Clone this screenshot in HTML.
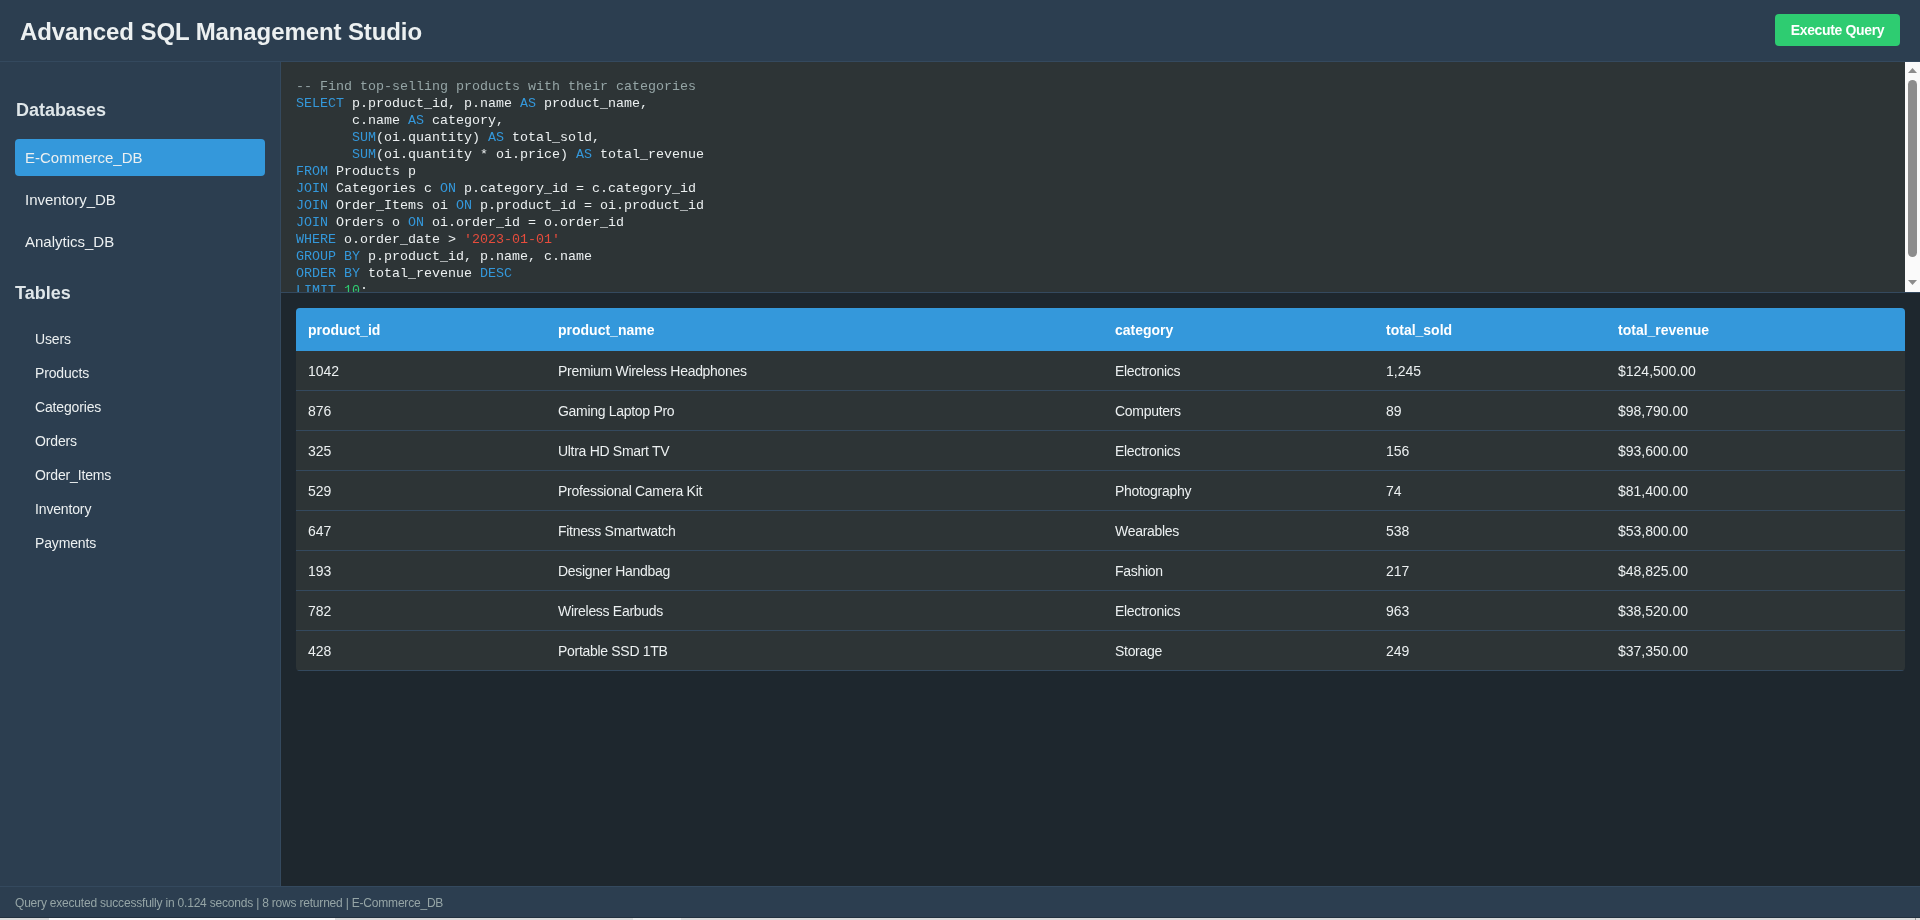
<!DOCTYPE html>
<html>
<head>
<meta charset="utf-8">
<style>
*{box-sizing:border-box;margin:0;padding:0;}
html,body{width:1920px;height:920px;overflow:hidden;will-change:transform;background:#2c3e50;font-family:"Liberation Sans",sans-serif;color:#ecf0f1;}
.header{position:absolute;left:0;top:0;width:1920px;height:62px;background:#2c3e50;border-bottom:1px solid #34495e;}
.title{position:absolute;left:20px;top:18px;letter-spacing:-0.1px;font-size:24px;font-weight:bold;line-height:28px;color:#ecf0f1;white-space:nowrap;}
.btn{position:absolute;left:1775px;top:14px;width:125px;height:32px;background:#2ecc71;border-radius:4px;color:#fff;font-weight:bold;font-size:14px;letter-spacing:-0.35px;line-height:33px;text-align:center;}
.sidebar{position:absolute;left:0;top:62px;width:281px;height:824px;background:#2c3e50;border-right:1px solid #34495e;}
.sh{position:absolute;left:16px;font-size:18px;font-weight:bold;color:#dfe6e9;line-height:22px;white-space:nowrap;}
.db{position:absolute;left:15px;width:250px;height:37px;border-radius:4px;font-size:15px;line-height:38px;padding-left:10px;color:#ecf0f1;white-space:nowrap;}
.db.sel{background:#3498db;}
.tb{position:absolute;left:35px;font-size:14px;line-height:18px;letter-spacing:-0.15px;color:#ecf0f1;white-space:nowrap;}
.editor{position:absolute;left:281px;top:62px;width:1639px;height:231px;background:#2d3436;border-bottom:1px solid #34495e;overflow:hidden;}
.code{position:absolute;left:15px;top:16px;font-family:"Liberation Mono",monospace;font-size:13.33px;line-height:17px;color:#ecf0f1;white-space:pre;}
.k{color:#3498db;}
.c{color:#95a5a6;}
.s{color:#e74c3c;}
.n{color:#2ecc71;}
.sb{position:absolute;left:1624px;top:0;width:15px;height:230px;background:#fafafa;}
.thumb{position:absolute;left:3px;top:18px;width:9px;height:177px;background:#8c8c8c;border-radius:5px;}
.up,.dn{position:absolute;left:0;top:0;}

.main{position:absolute;left:281px;top:293px;width:1639px;height:593px;background:#1e272e;}
.tablewrap{position:absolute;left:15px;top:15px;width:1609px;border-radius:4px;overflow:hidden;background:#2d3436;}
table{border-collapse:separate;border-spacing:0;width:1609px;table-layout:fixed;}
th{background:#3498db;color:#fff;font-weight:bold;font-size:14px;text-align:left;height:43px;padding:0 12px;}
td:nth-child(2),td:nth-child(3){letter-spacing:-0.3px;}
td{height:40px;border-bottom:1px solid #34495e;font-size:14px;padding:0 12px;color:#ecf0f1;}
.status{position:absolute;left:0;top:886px;width:1920px;height:32px;background:#2c3e50;border-top:1px solid #34495e;font-size:12px;color:#95a5a6;line-height:33px;padding-left:15px;white-space:nowrap;letter-spacing:-0.2px;}
.hs{position:absolute;left:0;top:918px;width:1920px;height:2px;background:#dcdcdc;}
.hs i{position:absolute;top:0;height:2px;}
.hd{position:absolute;left:0;top:917px;width:1920px;height:1px;background:#22313f;}
</style>
</head>
<body>
<div class="header">
  <div class="title">Advanced SQL Management Studio</div>
  <div class="btn">Execute Query</div>
</div>
<div class="sidebar">
  <div class="sh" style="top:37px">Databases</div>
  <div class="db sel" style="top:77px">E-Commerce_DB</div>
  <div class="db" style="top:119px">Inventory_DB</div>
  <div class="db" style="top:161px">Analytics_DB</div>
  <div class="sh" style="top:220px;left:15px">Tables</div>
  <div class="tb" style="top:268px">Users</div>
  <div class="tb" style="top:302px">Products</div>
  <div class="tb" style="top:336px">Categories</div>
  <div class="tb" style="top:370px">Orders</div>
  <div class="tb" style="top:404px">Order_Items</div>
  <div class="tb" style="top:438px">Inventory</div>
  <div class="tb" style="top:472px">Payments</div>
</div>
<div class="editor">
<div class="code"><span class="c">-- Find top-selling products with their categories</span>
<span class="k">SELECT</span> p.product_id, p.name <span class="k">AS</span> product_name,
       c.name <span class="k">AS</span> category,
       <span class="k">SUM</span>(oi.quantity) <span class="k">AS</span> total_sold,
       <span class="k">SUM</span>(oi.quantity * oi.price) <span class="k">AS</span> total_revenue
<span class="k">FROM</span> Products p
<span class="k">JOIN</span> Categories c <span class="k">ON</span> p.category_id = c.category_id
<span class="k">JOIN</span> Order_Items oi <span class="k">ON</span> p.product_id = oi.product_id
<span class="k">JOIN</span> Orders o <span class="k">ON</span> oi.order_id = o.order_id
<span class="k">WHERE</span> o.order_date &gt; <span class="s">'2023-01-01'</span>
<span class="k">GROUP BY</span> p.product_id, p.name, c.name
<span class="k">ORDER BY</span> total_revenue <span class="k">DESC</span>
<span class="k">LIMIT</span> <span class="n">10</span>;</div>
  <div class="sb"><svg class="up" width="15" height="230"><polygon points="3,11 12,11 7.5,6" fill="#8c8c8c"/><polygon points="3,218 12,218 7.5,223" fill="#8c8c8c"/></svg><div class="thumb"></div></div>
</div>
<div class="main">
  <div class="tablewrap">
  <table>
    <colgroup><col style="width:250px"><col style="width:557px"><col style="width:271px"><col style="width:232px"><col style="width:299px"></colgroup>
    <thead><tr><th>product_id</th><th>product_name</th><th>category</th><th>total_sold</th><th>total_revenue</th></tr></thead>
    <tbody>
      <tr><td>1042</td><td>Premium Wireless Headphones</td><td>Electronics</td><td>1,245</td><td>$124,500.00</td></tr>
      <tr><td>876</td><td>Gaming Laptop Pro</td><td>Computers</td><td>89</td><td>$98,790.00</td></tr>
      <tr><td>325</td><td>Ultra HD Smart TV</td><td>Electronics</td><td>156</td><td>$93,600.00</td></tr>
      <tr><td>529</td><td>Professional Camera Kit</td><td>Photography</td><td>74</td><td>$81,400.00</td></tr>
      <tr><td>647</td><td>Fitness Smartwatch</td><td>Wearables</td><td>538</td><td>$53,800.00</td></tr>
      <tr><td>193</td><td>Designer Handbag</td><td>Fashion</td><td>217</td><td>$48,825.00</td></tr>
      <tr><td>782</td><td>Wireless Earbuds</td><td>Electronics</td><td>963</td><td>$38,520.00</td></tr>
      <tr><td>428</td><td>Portable SSD 1TB</td><td>Storage</td><td>249</td><td>$37,350.00</td></tr>
    </tbody>
  </table>
  </div>
</div>
<div class="status">Query executed successfully in 0.124 seconds | 8 rows returned | E-Commerce_DB</div>
<div class="hd"></div><div class="hs"><i style="left:49px;width:286px;background:#fafafa"></i><i style="left:633px;width:48px;background:#efefef"></i><i style="left:1915px;width:1px;background:#999"></i></div>
</body>
</html>
